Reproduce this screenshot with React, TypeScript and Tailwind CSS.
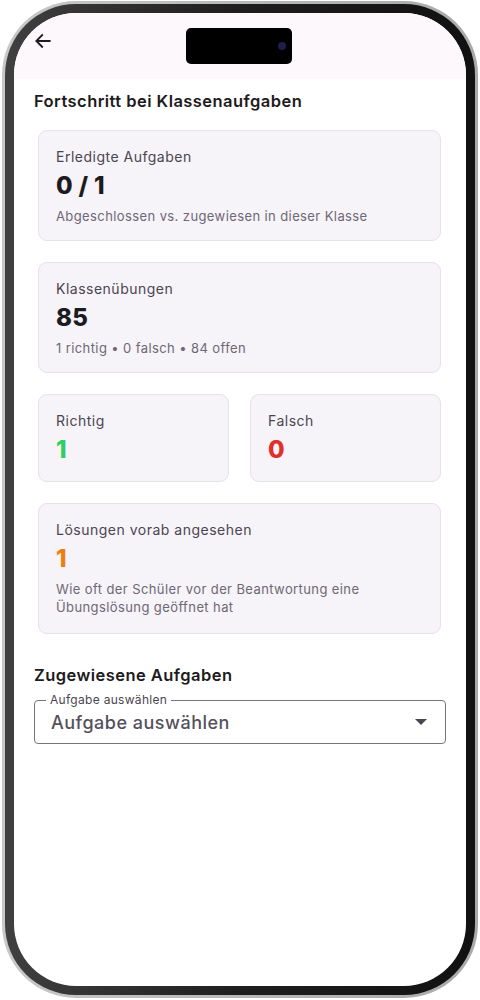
import React from 'react';

const StatCard: React.FC<{
  label: string;
  value: string;
  valueClass?: string;
  sub?: string;
  className?: string;
}> = ({ label, value, valueClass = 'text-[#1d1b20]', sub, className = 'pb-[15px]' }) => (
  <div className={`rounded-[9px] border border-[#e7e1ea] bg-[#f6f3f9] px-[17px] pt-[16px] ${className}`}>
    <div className="text-[14px] leading-5 tracking-[0.5px] text-[#4a4650]">{label}</div>
    <div className={`mt-[3px] text-[24px] font-extrabold leading-8 tracking-[0.3px] ${valueClass}`}>{value}</div>
    {sub && (
      <div className="mt-[5px] text-[13px] leading-[18px] tracking-[0.4px] text-[#6d6873]">{sub}</div>
    )}
  </div>
);

export default function App() {
  return (
    <div className="h-[1000px] w-[480px] bg-white pt-[1px] pl-[2px]" style={{ fontFamily: 'Inter, "Noto Sans", sans-serif' }}>
      {/* phone frame */}
      <div className="h-[997px] w-[476px] rounded-[74px] bg-gradient-to-r from-[#c8c8c8] to-[#a9a9a9] p-[3px]">
        <div className="h-full w-full rounded-[71px] bg-gradient-to-r from-[#404040] via-[#1e1e1e] to-[#111111] p-[9px]">
          <div className="relative h-full w-full overflow-hidden rounded-[62px] bg-white">
            {/* dynamic island */}
            <div className="absolute left-[172px] top-[15px] flex h-[36px] w-[106px] items-center justify-end rounded-[5px] bg-black pr-[6px]">
              <div className="h-[8px] w-[8px] rounded-full bg-[#1e1e4a]" />
            </div>

            {/* header */}
            <div className="h-[66px] bg-[#fcf8fc] pl-[19px] pt-[18px]">
              <svg width="20" height="20" viewBox="0 0 24 24" fill="none" stroke="#1d1b20" strokeWidth="2.2" strokeLinecap="square">
                <path d="M20 12H5M11 5l-7 7 7 7" />
              </svg>
            </div>

            <div className="px-[20px] pt-[12px]">
              <h2 className="text-[16.5px] font-semibold leading-5 tracking-[0.45px] text-[#1d1b20]">
                Fortschritt bei Klassenaufgaben
              </h2>

              <div className="ml-[4px] mr-[5px] mt-[19px] flex flex-col gap-[21px]">
                <StatCard
                  label="Erledigte Aufgaben"
                  value="0 / 1"
                  sub="Abgeschlossen vs. zugewiesen in dieser Klasse"
                />
                <StatCard label="Klassenübungen" value="85" sub="1 richtig • 0 falsch • 84 offen" />
                <div className="grid grid-cols-2 gap-[21px]">
                  <StatCard label="Richtig" value="1" valueClass="text-[#2fcf62]" />
                  <StatCard label="Falsch" value="0" valueClass="text-[#e0302a]" />
                </div>
                <StatCard
                  label="Lösungen vorab angesehen"
                  value="1"
                  valueClass="text-[#ee7d12]"
                  className="pb-[17px]"
                  sub="Wie oft der Schüler vor der Beantwortung eine Übungslösung geöffnet hat"
                />
              </div>

              <h2 className="mt-[31px] text-[16.5px] font-semibold leading-5 tracking-[0.45px] text-[#1d1b20]">
                Zugewiesene Aufgaben
              </h2>

              <div className="relative mt-[15px] flex h-[44px] items-center rounded-[4px] border border-[#79747e] pl-[16px] pr-[18px]">
                <span className="absolute -top-[8px] left-[11px] bg-white px-[4px] text-[12px] leading-[14px] tracking-[0.3px] text-[#4a4650]">
                  Aufgabe auswählen
                </span>
                <span className="flex-1 text-[18px] font-medium tracking-[0.5px] text-[#55515b]">Aufgabe auswählen</span>
                <svg width="12" height="6" viewBox="0 0 12 6">
                  <path d="M0 0h12L6 6z" fill="#4a4650" />
                </svg>
              </div>
            </div>
          </div>
        </div>
      </div>
    </div>
  );
}
